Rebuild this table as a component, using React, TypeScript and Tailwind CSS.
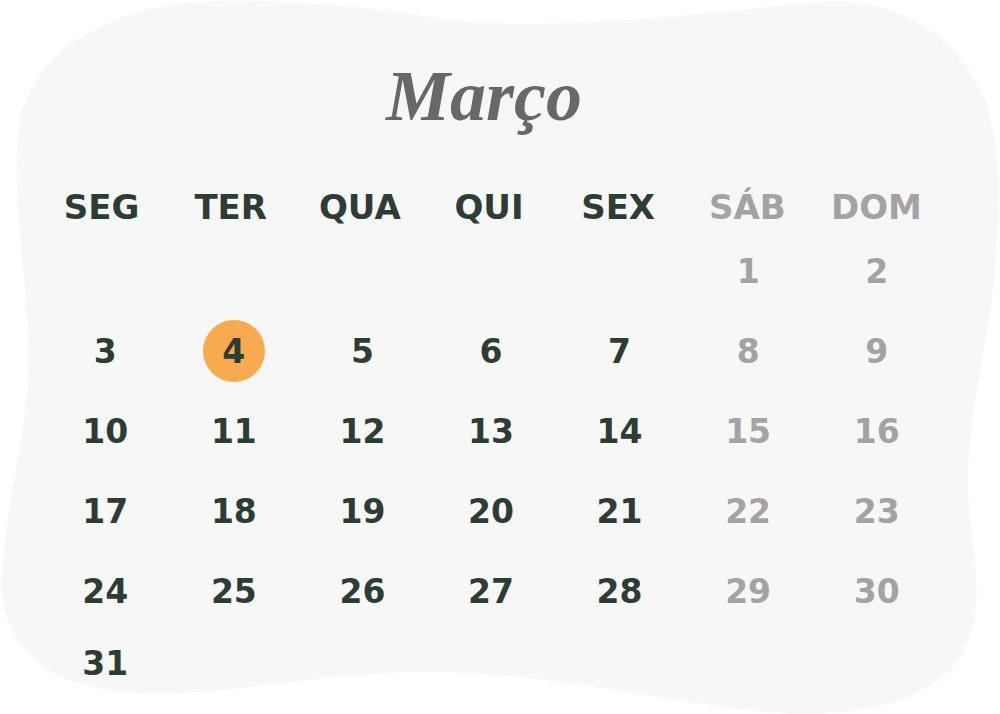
export default function App() {

  // Weekday headers, last two are weekend
  const weekdays = ["SEG", "TER", "QUA", "QUI", "SEX", "SÁB", "DOM"];

  // March starts on a saturday
  const cells: (number | null)[] = [null, null, null, null, null];
  for (let d = 1; d <= 31; d++) cells.push(d);
  while (cells.length % 7 !== 0) cells.push(null);

  const rows: (number | null)[][] = [];
  for (let i = 0; i < cells.length; i += 7) rows.push(cells.slice(i, i + 7));

  const rowHeights = ["h-[80px]", "h-[80px]", "h-[80px]", "h-[80px]", "h-[80px]", "h-[64px]"];

  return (
    <main className="relative w-[1000px] h-[714px] bg-white overflow-hidden">
      {/* Blob background */}
      <svg className="absolute inset-0" width="1000" height="714" viewBox="0 0 1000 714">
        <path
          d="M 200 2 C 260 -2 360 4 447 20 C 560 32 700 14 817 2 C 900 -5 960 40 985 100 C 1003 150 1000 230 992 300 C 982 370 962 440 970 520 C 978 580 985 630 950 670 C 910 710 830 718 766 712 C 650 700 520 665 383 673 C 280 680 180 702 110 690 C 40 680 0 640 2 580 C 4 500 32 430 28 340 C 25 260 10 180 20 120 C 35 50 110 8 200 2 Z"
          fill="#f7f7f7"
        />
      </svg>

      <div className="relative flex flex-col" style={{ fontFamily: '"DejaVu Sans", sans-serif' }}>
        {/* Month */}
        <section className="h-[183px] pt-[60px] pr-[32px] text-center">
          <h1
            className="text-[72px] leading-none italic font-bold text-[#686868]"
            style={{ fontFamily: '"Liberation Serif", serif' }}
          >
            Março
          </h1>
        </section>

        {/* Weekdays */}
        <section className="grid grid-cols-7 h-[48px] ml-[37px] w-[904px]">
          {weekdays.map((day, i) => (
            <div
              key={day}
              className={`flex items-center justify-center text-[34px] leading-none font-bold ${i > 4 ? "text-[#a3a3a3]" : "text-[#2c3d34]"}`}
            >
              {day}
            </div>
          ))}
        </section>

        {/* Days */}
        <section className="flex flex-col ml-[41px] w-[900px]">
          {rows.map((row, r) => (
            <div key={r} className={`grid grid-cols-7 ${rowHeights[r]}`}>
              {row.map((d, i) => (
                <div key={i} className="flex items-center justify-center">
                  {d === 4 ? (
                    <span className="flex items-center justify-center w-[62px] h-[62px] rounded-full bg-[#f8aa4e] text-[33px] leading-none font-bold text-[#2c3d34]">
                      {d}
                    </span>
                  ) : (
                    <span className={`text-[33px] leading-none font-bold ${i > 4 ? "text-[#a3a3a3]" : "text-[#2c3d34]"}`}>
                      {d}
                    </span>
                  )}
                </div>
              ))}
            </div>
          ))}
        </section>
      </div>
    </main>
  );
}
